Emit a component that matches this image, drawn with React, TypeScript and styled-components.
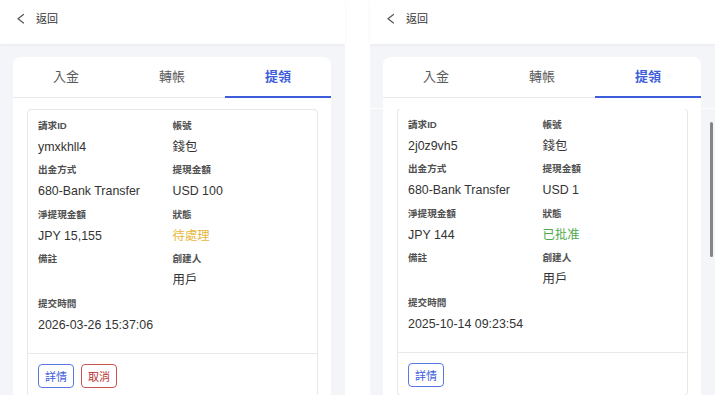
import React from "react";
import styled, { createGlobalStyle } from "styled-components";

const GlobalStyle = createGlobalStyle`
  html, body { margin: 0; padding: 0; background: #ffffff; }
  body {
    font-family: "Liberation Sans", "Noto Sans CJK TC", Arial, sans-serif;
    -webkit-font-smoothing: antialiased;
  }
  * { box-sizing: border-box; }
`;

const BLUE = "#3d5ddb";

const Page = styled.div`
  display: flex;
  gap: 25px;
  width: 715px;
  height: 395px;
  overflow: hidden;
  background: #ffffff;
`;

const Panel = styled.div`
  position: relative;
  width: 345px;
  flex: none;
  display: flex;
  flex-direction: column;
  background: #f3f5f8;
`;

const Header = styled.div`
  height: 44px;
  flex: none;
  display: flex;
  align-items: flex-start;
  gap: 10px;
  padding: 10px 0 0 16px;
  background: #ffffff;
  box-shadow: 0 1px 3px rgba(0, 0, 0, 0.05);
  position: relative;
  z-index: 1;
`;

const BackText = styled.span`
  font-size: 11px;
  line-height: 17px;
  color: #333;
  font-family: "Noto Sans CJK TC", sans-serif;
`;

const Body = styled.div`
  padding: 13px 14px 0 13px;
`;

const TabCard = styled.div`
  background: #ffffff;
  border-radius: 8px 8px 0 0;
`;

const TabBar = styled.div`
  display: grid;
  grid-template-columns: repeat(3, 1fr);
  border-bottom: 1px solid #e8eaed;
`;

const Tab = styled.div<{ $active?: boolean }>`
  position: relative;
  height: 40px;
  padding-bottom: 3px;
  display: flex;
  align-items: center;
  justify-content: center;
  font-family: "Noto Sans CJK TC", sans-serif;
  font-size: 13px;
  line-height: 18px;
  font-weight: ${(p) => (p.$active ? 600 : 400)};
  color: ${(p) => (p.$active ? BLUE : "#5a5a5a")};
  &::after {
    content: "";
    display: ${(p) => (p.$active ? "block" : "none")};
    position: absolute;
    left: 0;
    right: 0;
    bottom: -1px;
    height: 2px;
    background: ${BLUE};
  }
`;

const List = styled.div<{ $top: number }>`
  padding: ${(p) => p.$top}px 13px 0 14px;
`;

const ItemCard = styled.div`
  border: 1px solid #e5e7ea;
  border-radius: 4px;
  background: #ffffff;
`;

const Details = styled.div`
  display: grid;
  grid-template-columns: 1fr 1fr;
  row-gap: 7.4px;
  padding: 9px 10px 19px 10px;
`;

const Field = styled.div`
  display: flex;
  flex-direction: column;
`;

const Label = styled.div`
  font-size: 9.6px;
  line-height: 14px;
  font-weight: 700;
  color: #505050;
`;

type Tone = "normal" | "pending" | "approved";

const Value = styled.div<{ $tone?: Tone }>`
  margin-top: 5px;
  min-height: 18px;
  font-size: 12.4px;
  line-height: 18px;
  color: ${(p) =>
    p.$tone === "pending" ? "#e7b73c" : p.$tone === "approved" ? "#4caa4c" : "#333"};
`;

const Footer = styled.div`
  display: flex;
  gap: 7px;
  padding: 10px 10px 8px 10px;
  border-top: 1px solid #e8eaed;
`;

const Button = styled.button<{ $variant?: "primary" | "danger" }>`
  height: 24px;
  padding: 0 6px;
  background: #ffffff;
  border-radius: 4px;
  border: 1px solid ${(p) => (p.$variant === "danger" ? "#c95454" : "#5a78e0")};
  color: ${(p) => (p.$variant === "danger" ? "#b8302e" : BLUE)};
  font-family: "Noto Sans CJK TC", sans-serif;
  font-size: 11px;
  line-height: 22px;
  cursor: pointer;
`;

const Seam = styled.div`
  position: absolute;
  left: 0;
  right: 0;
  top: 108px;
  height: 1px;
  background: #ffffff;
`;

const Scrollbar = styled.div`
  position: absolute;
  right: 2px;
  top: 122px;
  width: 3.5px;
  height: 135px;
  border-radius: 2px;
  background: #858585;
`;

const ChevronLeft = () => (
  <svg width="10" height="17" viewBox="0 0 10 17" fill="none">
    <polyline
      points="7.5,4.5 2,8.8 7.5,13"
      stroke="#555"
      strokeWidth="1.2"
      strokeLinecap="round"
      strokeLinejoin="round"
    />
  </svg>
);

type Record = {
  id: string;
  amount: string;
  net: string;
  status: string;
  tone: Tone;
  time: string;
  cancel: boolean;
};

const Withdrawal = ({ r, listTop, scroll }: { r: Record; listTop: number; scroll?: boolean }) => (
  <Panel>
    <Header>
      <ChevronLeft />
      <BackText>返回</BackText>
    </Header>
    {scroll && <Seam />}
    <Body>
      <TabCard>
        <TabBar>
          <Tab>入金</Tab>
          <Tab>轉帳</Tab>
          <Tab $active>提領</Tab>
        </TabBar>
        <List $top={listTop}>
          <ItemCard>
            <Details>
              <Field>
                <Label>請求ID</Label>
                <Value>{r.id}</Value>
              </Field>
              <Field>
                <Label>帳號</Label>
                <Value>錢包</Value>
              </Field>
              <Field>
                <Label>出金方式</Label>
                <Value>680-Bank Transfer</Value>
              </Field>
              <Field>
                <Label>提現金額</Label>
                <Value>{r.amount}</Value>
              </Field>
              <Field>
                <Label>淨提現金額</Label>
                <Value>{r.net}</Value>
              </Field>
              <Field>
                <Label>狀態</Label>
                <Value $tone={r.tone}>{r.status}</Value>
              </Field>
              <Field>
                <Label>備註</Label>
                <Value></Value>
              </Field>
              <Field>
                <Label>創建人</Label>
                <Value>用戶</Value>
              </Field>
              <Field>
                <Label>提交時間</Label>
                <Value>{r.time}</Value>
              </Field>
            </Details>
            <Footer>
              <Button $variant="primary">詳情</Button>
              {r.cancel && <Button $variant="danger">取消</Button>}
            </Footer>
          </ItemCard>
        </List>
      </TabCard>
    </Body>
    {scroll && <Scrollbar />}
  </Panel>
);

const records: Record[] = [
  {
    id: "ymxkhll4",
    amount: "USD 100",
    net: "JPY 15,155",
    status: "待處理",
    tone: "pending",
    time: "2026-03-26 15:37:06",
    cancel: true,
  },
  {
    id: "2j0z9vh5",
    amount: "USD 1",
    net: "JPY 144",
    status: "已批准",
    tone: "approved",
    time: "2025-10-14 09:23:54",
    cancel: false,
  },
];

export default function App() {
  return (
    <>
      <GlobalStyle />
      <Page>
        <Withdrawal r={records[0]} listTop={11} />
        <Withdrawal r={records[1]} listTop={10} scroll />
      </Page>
    </>
  );
}
